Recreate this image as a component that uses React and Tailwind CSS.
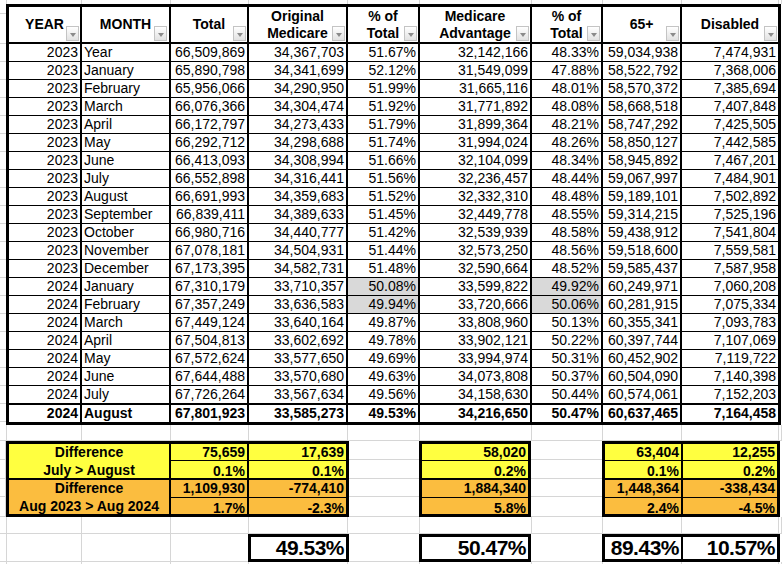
import React from "react";

const rows = [
  ["2023", "Year", "66,509,869", "34,367,703", "51.67%", "32,142,166", "48.33%", "59,034,938", "7,474,931"],
  ["2023", "January", "65,890,798", "34,341,699", "52.12%", "31,549,099", "47.88%", "58,522,792", "7,368,006"],
  ["2023", "February", "65,956,066", "34,290,950", "51.99%", "31,665,116", "48.01%", "58,570,372", "7,385,694"],
  ["2023", "March", "66,076,366", "34,304,474", "51.92%", "31,771,892", "48.08%", "58,668,518", "7,407,848"],
  ["2023", "April", "66,172,797", "34,273,433", "51.79%", "31,899,364", "48.21%", "58,747,292", "7,425,505"],
  ["2023", "May", "66,292,712", "34,298,688", "51.74%", "31,994,024", "48.26%", "58,850,127", "7,442,585"],
  ["2023", "June", "66,413,093", "34,308,994", "51.66%", "32,104,099", "48.34%", "58,945,892", "7,467,201"],
  ["2023", "July", "66,552,898", "34,316,441", "51.56%", "32,236,457", "48.44%", "59,067,997", "7,484,901"],
  ["2023", "August", "66,691,993", "34,359,683", "51.52%", "32,332,310", "48.48%", "59,189,101", "7,502,892"],
  ["2023", "September", "66,839,411", "34,389,633", "51.45%", "32,449,778", "48.55%", "59,314,215", "7,525,196"],
  ["2023", "October", "66,980,716", "34,440,777", "51.42%", "32,539,939", "48.58%", "59,438,912", "7,541,804"],
  ["2023", "November", "67,078,181", "34,504,931", "51.44%", "32,573,250", "48.56%", "59,518,600", "7,559,581"],
  ["2023", "December", "67,173,395", "34,582,731", "51.48%", "32,590,664", "48.52%", "59,585,437", "7,587,958"],
  ["2024", "January", "67,310,179", "33,710,357", "50.08%", "33,599,822", "49.92%", "60,249,971", "7,060,208"],
  ["2024", "February", "67,357,249", "33,636,583", "49.94%", "33,720,666", "50.06%", "60,281,915", "7,075,334"],
  ["2024", "March", "67,449,124", "33,640,164", "49.87%", "33,808,960", "50.13%", "60,355,341", "7,093,783"],
  ["2024", "April", "67,504,813", "33,602,692", "49.78%", "33,902,121", "50.22%", "60,397,744", "7,107,069"],
  ["2024", "May", "67,572,624", "33,577,650", "49.69%", "33,994,974", "50.31%", "60,452,902", "7,119,722"],
  ["2024", "June", "67,644,488", "33,570,680", "49.63%", "34,073,808", "50.37%", "60,504,090", "7,140,398"],
  ["2024", "July", "67,726,264", "33,567,634", "49.56%", "34,158,630", "50.44%", "60,574,061", "7,152,203"],
  ["2024", "August", "67,801,923", "33,585,273", "49.53%", "34,216,650", "50.47%", "60,637,465", "7,164,458"],
];

const headers = [
  ["YEAR"],
  ["MONTH"],
  ["Total"],
  ["Original", "Medicare"],
  ["% of", "Total"],
  ["Medicare", "Advantage"],
  ["% of", "Total"],
  ["65+"],
  ["Disabled"],
];

const colW = ["w-[73px]", "w-[89px]", "w-[78px]", "w-[99px]", "w-[72px]", "w-[112px]", "w-[71px]", "w-[79px]", "w-[96px]"];

// spreadsheet gridline columns (right edge carries the gridline)
const gridW = ["w-[7px]", "w-[75px]", "w-[89px]", "w-[78px]", "w-[99px]", "w-[72px]", "w-[112px]", "w-[71px]", "w-[79px]", "w-[97px]", "w-[3px]"];

function EmptyRow({ h, line = true }) {
  return (
    <div className={`flex ${h}`}>
      {gridW.map((w, i) => (
        <div key={i} className={`${w} shrink-0 border-r border-[#d6d6d6] ${line ? "border-b" : ""}`} />
      ))}
    </div>
  );
}

function Drop({ right = "right-[1px]" }) {
  return (
    <span
      className={`absolute bottom-[1px] ${right} flex h-[15px] w-[13px] items-center justify-center border border-[#c4c4c4] bg-linear-to-b from-white to-[#e2e2e2]`}
    >
      <span className="mt-[3px] h-0 w-0 border-x-[3px] border-t-[4px] border-x-transparent border-t-[#8a8a8a]" />
    </span>
  );
}

function GapCol({ w }) {
  return (
    <div className={`${w} flex shrink-0 flex-col`}>
      <div className="h-[19px] border-b border-[#d6d6d6]" />
      <div className="h-[19px] border-b border-[#d6d6d6]" />
      <div className="h-[18px] border-b border-[#d6d6d6]" />
      <div className="flex-1 border-b border-[#d6d6d6]" />
    </div>
  );
}

function NumStack({ top, bottom, first, w = "flex-1", right = false }) {
  return (
    <div className={`${w} flex shrink-0 flex-col ${right ? "border-r-2 border-black" : ""}`}>
      <div className={`flex ${first ? "h-[17px]" : "h-[18px]"} items-center justify-end border-b border-black pr-[2px]`}>{top}</div>
      <div className="flex flex-1 items-center justify-end pr-[2px]">{bottom}</div>
    </div>
  );
}

function Band({ color, last, label, cols }) {
  return (
    <div className={`flex ${last ? "h-[34px]" : "h-[36px] border-b-2 border-black"} ${color}`}>
      {label && (
        <div className="flex w-[162px] shrink-0 flex-col items-center justify-center border-r-2 border-black leading-[18px]">
          {label.map((l) => (
            <span key={l}>{l}</span>
          ))}
        </div>
      )}
      {cols}
    </div>
  );
}

const yellow = "bg-[#ffff40]";
const orange = "bg-[#fbbd3f]";

export default function App() {
  return (
    <div className="h-[564px] w-[782px] overflow-hidden bg-white font-['Liberation_Sans',Arial,sans-serif] text-[14px] text-black">
      <EmptyRow h="h-[4px]" line={false} />

      <div className="flex">
        <div className="flex w-[6px] shrink-0 flex-col">
          <div className="h-[10px] border-b border-[#d6d6d6]" />
          <div className="h-[30px] border-b border-[#d6d6d6]" />
          {rows.map((r, i) => (
            <div key={i} className="h-[18px] shrink-0 border-b border-[#d6d6d6]" />
          ))}
        </div>

        <div className="w-[775px] shrink-0 border-[3px] border-black">
          <div className="flex h-[37px] border-b-2 border-black">
            {headers.map((lines, i) => (
              <div
                key={i}
                className={`${colW[i]} relative flex shrink-0 flex-col items-center justify-center font-bold leading-[17px] ${i < 8 ? "border-r-2 border-black" : ""}`}
              >
                {lines.map((l) => (
                  <span key={l}>{l}</span>
                ))}
                <Drop right={i === 1 ? "right-[2px]" : "right-[1px]"} />
              </div>
            ))}
          </div>

          {rows.map((r, ri) => {
            const last = ri === rows.length - 1;
            const before = ri === rows.length - 2;
            const h = last ? "h-[17px]" : before ? "h-[19px] border-b-2" : "h-[18px] border-b";
            return (
              <div key={ri} className={`flex ${h} border-black ${last ? "font-bold" : ""}`}>
                {r.map((v, ci) => {
                  const gray = (ri === 13 || ri === 14) && (ci === 4 || ci === 6);
                  return (
                    <div
                      key={ci}
                      className={`${colW[ci]} flex shrink-0 items-center leading-[17px] whitespace-nowrap ${ci === 1 ? "justify-start pl-[2px]" : "justify-end pr-[2px]"} ${ci < 8 ? "border-r-2 border-black" : ""} ${gray ? "bg-[#d9d9d9]" : ""}`}
                    >
                      {v}
                    </div>
                  );
                })}
              </div>
            );
          })}
        </div>
        <div className="w-[1px] shrink-0" />
      </div>

      <EmptyRow h="h-[16px]" />

      <div className="flex h-[76px] font-bold">
        <div className="flex w-[6px] shrink-0 flex-col border-r border-[#d6d6d6]">
          <div className="h-[19px] border-b border-[#d6d6d6]" />
          <div className="h-[19px] border-b border-[#d6d6d6]" />
          <div className="h-[18px] border-b border-[#d6d6d6]" />
          <div className="flex-1 border-b border-[#d6d6d6]" />
        </div>

        <div className="flex w-[343px] shrink-0 flex-col border-[3px] border-black">
          <Band
            color={yellow}
            label={["Difference", "July > August"]}
            cols={
              <>
                <NumStack w="w-[78px]" right first top="75,659" bottom="0.1%" />
                <NumStack first top="17,639" bottom="0.1%" />
              </>
            }
          />
          <Band
            color={orange}
            last
            label={["Difference", "Aug 2023 > Aug 2024"]}
            cols={
              <>
                <NumStack w="w-[78px]" right top="1,109,930" bottom="1.7%" />
                <NumStack top="-774,410" bottom="-2.3%" />
              </>
            }
          />
        </div>

        <GapCol w="w-[70px]" />

        <div className="flex w-[112px] shrink-0 flex-col border-[3px] border-black">
          <Band color={yellow} cols={<NumStack first top="58,020" bottom="0.2%" />} />
          <Band color={orange} last cols={<NumStack top="1,884,340" bottom="5.8%" />} />
        </div>

        <GapCol w="w-[71px]" />

        <div className="flex w-[178px] shrink-0 flex-col border-[3px] border-black">
          <Band
            color={yellow}
            cols={
              <>
                <NumStack w="w-[78px]" right first top="63,404" bottom="0.1%" />
                <NumStack first top="12,255" bottom="0.2%" />
              </>
            }
          />
          <Band
            color={orange}
            last
            cols={
              <>
                <NumStack w="w-[78px]" right top="1,448,364" bottom="2.4%" />
                <NumStack top="-338,434" bottom="-4.5%" />
              </>
            }
          />
        </div>

        <div className="w-[2px] shrink-0" />
      </div>

      <EmptyRow h="h-[17px]" />

      <div className="flex h-[28px] text-[21px] font-bold tracking-[-0.5px]">
        <div className="w-[7px] shrink-0 border-r border-b border-[#d6d6d6]" />
        <div className="w-[75px] shrink-0 border-r border-b border-[#d6d6d6]" />
        <div className="w-[89px] shrink-0 border-r border-b border-[#d6d6d6]" />
        <div className="w-[77px] shrink-0 border-b border-[#d6d6d6]" />
        <div className="flex w-[101px] shrink-0 items-center justify-end border-[3px] border-black pr-[2px]">49.53%</div>
        <div className="w-[70px] shrink-0 border-b border-[#d6d6d6]" />
        <div className="flex w-[112px] shrink-0 items-center justify-end border-[3px] border-black pr-[2px]">50.47%</div>
        <div className="w-[71px] shrink-0 border-b border-[#d6d6d6]" />
        <div className="flex w-[178px] shrink-0 border-[3px] border-black">
          <div className="flex w-[78px] shrink-0 items-center justify-end border-r-2 border-black pr-[2px]">89.43%</div>
          <div className="flex flex-1 items-center justify-end pr-[2px]">10.57%</div>
        </div>
        <div className="w-[2px] shrink-0" />
      </div>

      <EmptyRow h="h-[2px]" line={false} />
    </div>
  );
}
